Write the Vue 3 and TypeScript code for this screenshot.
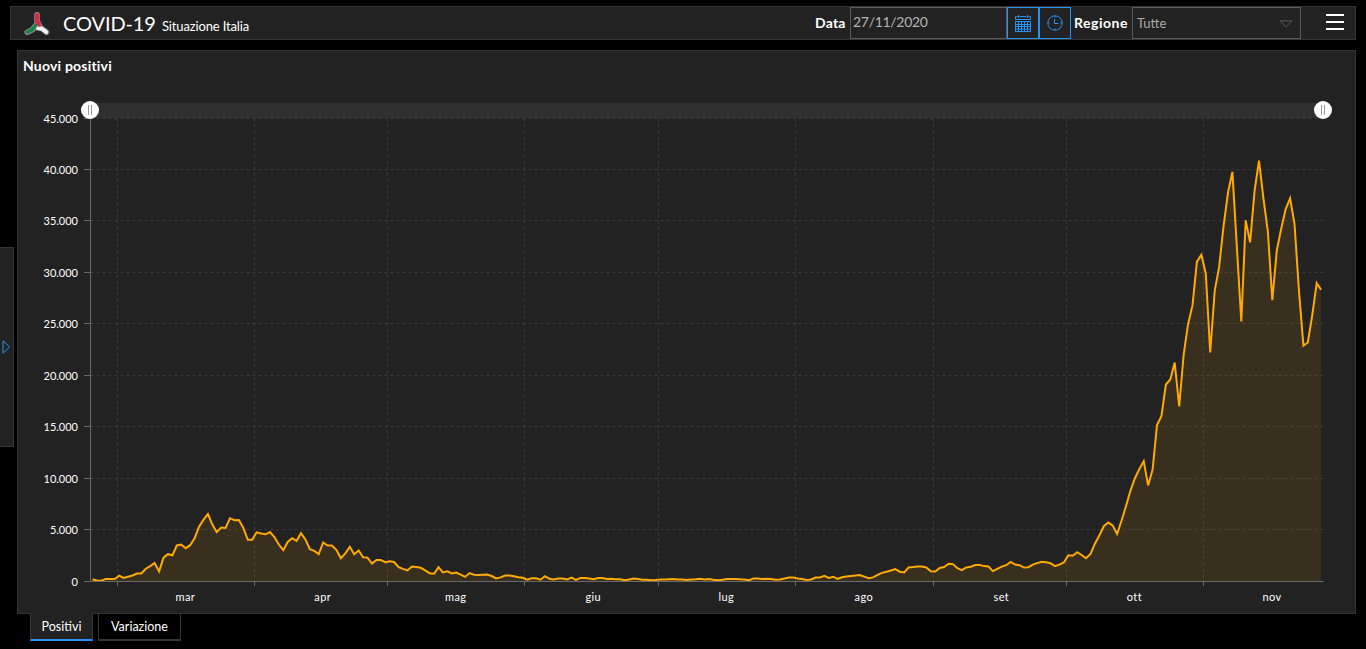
<script setup lang="ts">
interface Month {
  label: string
  values: number[]
}

const months: Month[] = [
  { label: '', values: [221, 93, 78, 250, 238, 240] },
  { label: 'mar', values: [566, 342, 466, 587, 769, 778, 1247, 1492, 1797, 977, 2313, 2651, 2547, 3497, 3590, 3233, 3526, 4207, 5322, 5986, 6557, 5560, 4789, 5249, 5210, 6153, 5959, 5974, 5217, 4050, 4053] },
  { label: 'apr', values: [4782, 4668, 4585, 4805, 4316, 3599, 3039, 3836, 4204, 3951, 4694, 4092, 3153, 2972, 2667, 3786, 3493, 3491, 3047, 2256, 2729, 3370, 2646, 3021, 2357, 2324, 1739, 2091, 2086, 1872] },
  { label: 'mag', values: [1965, 1900, 1389, 1221, 1075, 1444, 1401, 1327, 1083, 802, 744, 1402, 888, 992, 789, 875, 675, 451, 813, 665, 642, 652, 669, 531, 300, 397, 584, 593, 516, 416, 355] },
  { label: 'giu', values: [178, 318, 321, 177, 518, 270, 197, 280, 283, 202, 379, 163, 346, 338, 301, 210, 328, 331, 251, 264, 224, 221, 113, 190, 296, 255, 175, 174, 126, 142] },
  { label: 'lug', values: [182, 201, 223, 235, 192, 208, 137, 193, 214, 276, 188, 234, 169, 114, 162, 230, 231, 249, 218, 190, 128, 280, 306, 252, 274, 254, 168, 202, 289, 382, 379] },
  { label: 'ago', values: [295, 238, 159, 190, 384, 401, 552, 347, 463, 259, 412, 476, 522, 574, 629, 477, 320, 401, 642, 840, 947, 1071, 1209, 953, 876, 1366, 1409, 1460, 1444, 1365, 996] },
  { label: 'set', values: [975, 1326, 1397, 1732, 1694, 1296, 1108, 1366, 1430, 1597, 1616, 1501, 1456, 1008, 1229, 1452, 1585, 1907, 1638, 1587, 1350, 1391, 1640, 1786, 1912, 1869, 1766, 1494, 1647, 1851] },
  { label: 'ott', values: [2548, 2499, 2844, 2578, 2257, 2677, 3678, 4458, 5372, 5724, 5456, 4619, 5898, 7332, 8804, 10010, 10925, 11705, 9338, 10874, 15199, 16079, 19143, 19644, 21273, 17012, 21994, 24991, 26831, 31084, 31758] },
  { label: 'nov', values: [29907, 22253, 28244, 30550, 34505, 37809, 39811, 32616, 25271, 35098, 32961, 37978, 40902, 37255, 33979, 27354, 32191, 34283, 36176, 37242, 34767, 28337, 22930, 23232, 25853, 29003, 28352] },
]

const left = 72.5
const right = 1305.5
const top = 37.5
const bottom = 500.5
const maxValue = 45000

const daily = months.flatMap((m) => m.values)
const step = (right - left) / daily.length
const yOf = (v: number): number => bottom - (v / maxValue) * (bottom - top)
const crisp = (n: number): number => Math.floor(n) + 0.5

// Daylight saving time moves a day's start one hour earlier.
const winter = ['', 'mar', 'nov']
const dayShift = (label: string): number => (winter.includes(label) ? 0 : -1 / 24)

const points = daily.map((v, i) => `${(left + (i + 0.46) * step).toFixed(1)},${yOf(v).toFixed(1)}`)
const linePath = 'M' + points.join('L')
const areaPath = `${linePath}L${(right - step * 0.54).toFixed(1)},${bottom}L${(left + step * 0.46).toFixed(1)},${bottom}Z`

const rows = Array.from({ length: 10 }, (_, i) => ({
  y: crisp(yOf(i * 5000) - 0.46),
  label: i === 0 ? '0' : `${i * 5}.000`,
}))

let day = 0
const columns = months
  .map((m) => {
    const start = day + dayShift(m.label)
    day += m.values.length
    return { label: m.label, x: crisp(left + start * step), mid: left + (start + 15.4) * step }
  })
  .filter((c) => c.label !== '')
</script>

<template>
  <div class="dashboard">
    <header class="topbar">
      <svg class="logo" width="26" height="24" viewBox="0 0 26 24">
        <g fill="none" stroke-linecap="round" stroke-linejoin="round">
          <g stroke="#8e8e8e" stroke-width="5.6">
            <path d="M13 3.800v6l2.400 4.600" />
            <path d="M12 14.200l-3.600 4.600-5.100 2.400" />
            <path d="M12.800 16.400l5.200 1.200 4.400 3.600" />
          </g>
          <path stroke="#f4f4f4" stroke-width="3.8" d="M13.400 16.800l4.600 1 4.200 3.200" />
          <path stroke="#168444" stroke-width="3.8" d="M11.800 14.400l-3.400 4.200-4.800 2.300" />
          <path stroke="#de2745" stroke-width="4" d="M13 4v5.600l2.200 4.200" />
        </g>
      </svg>
      <h1 class="title">COVID-19</h1>
      <span class="subtitle">Situazione Italia</span>
      <label class="caption date-caption">Data</label>
      <div class="date-field">27/11/2020</div>
      <button class="tool" aria-label="Calendario">
        <svg width="16" height="17" viewBox="0 0 16 17" fill="none" stroke="#2693f3">
          <path d="M2.500 1.500H.5v3h15v-3h-2M4.500 1.500h7M3.500 0v3M12.500 0v3M.5 6.500h15v10H.5zM.5 9.500h15M.5 11.500h15M.5 14h15M3.500 6.500v10M6.500 6.500v10M9.500 6.500v10M12.500 6.500v10" />
        </svg>
      </button>
      <button class="tool clock" aria-label="Ora">
        <svg width="16" height="16" viewBox="0 0 16 16" fill="none" stroke="#2693f3">
          <circle cx="8" cy="8" r="7.2" />
          <path d="M7.500 4v4.500h4M8 1v1.500M8 13.500V15M1 8h1.500M13.500 8H15" />
        </svg>
      </button>
      <label class="caption region-caption">Regione</label>
      <div class="select">
        <span>Tutte</span>
        <svg width="14" height="8" viewBox="0 0 14 8"><path d="M1.200.8h11.600L7 6.800z" fill="none" stroke="#5a5a5a" /></svg>
      </div>
      <button class="menu" aria-label="Menu"><i /><i /><i /></button>
    </header>

    <main class="body">
      <aside class="drawer">
        <svg width="9" height="14" viewBox="0 0 9 14"><path d="M1 .8v12.400L7.600 7z" fill="none" stroke="#2693f3" /></svg>
      </aside>
      <div class="content">
        <section class="panel">
          <h2>Nuovi positivi</h2>
          <svg class="chart" width="1337" height="532" viewBox="0 0 1337 532">
            <rect x="72" y="22" width="1233" height="15" fill="#303030" />
            <g class="grid">
              <line v-for="r in rows.slice(1)" :key="r.y" :x1="left" :x2="right" :y1="r.y" :y2="r.y" />
              <line v-for="c in columns" :key="c.label" :x1="c.x" :x2="c.x" :y1="top" :y2="bottom" />
            </g>
            <path :d="areaPath" fill="#ffaa00" fill-opacity="0.1" />
            <path :d="linePath" fill="none" stroke="#ffaa00" stroke-width="2" />
            <g class="axis">
              <line :x1="left" :x2="left" :y1="top" :y2="bottom" />
              <line :x1="left" :x2="right" :y1="bottom" :y2="bottom" />
              <line v-for="r in rows" :key="r.y" x1="66" x2="72" :y1="r.y" :y2="r.y" />
              <line v-for="c in columns" :key="c.label" :x1="c.x" :x2="c.x" y1="501" y2="505" />
            </g>
            <g class="labels">
              <text v-for="r in rows" :key="r.label" x="60" :y="r.y + 4" text-anchor="end">{{ r.label }}</text>
              <text v-for="c in columns" :key="c.label" class="month" :x="c.mid" y="519.5" text-anchor="middle">{{ c.label }}</text>
            </g>
            <g v-for="x in [72, 1305]" :key="x">
              <circle :cx="x" cy="29" r="9" fill="#fff" />
              <path :d="`M${x - 1.5} 24v10M${x + 1.5} 24v10`" stroke="#999" />
            </g>
          </svg>
        </section>
        <nav class="tabs">
          <button class="tab active">Positivi</button>
          <button class="tab">Variazione</button>
        </nav>
      </div>
    </main>
  </div>
</template>

<style>
body {
  background: #000;
}
</style>

<style scoped>
.dashboard {
  box-sizing: border-box;
  width: 1366px;
  height: 649px;
  padding: 6px 10px 0 0;
  overflow: hidden;
  background: #000;
  color: #fff;
  font-family: Lato, "Liberation Sans", sans-serif;
}
button {
  margin: 0;
  padding: 0;
  border: 0;
  border-radius: 0;
  background: none;
  color: inherit;
  font-family: inherit;
}
svg {
  display: block;
  flex: none;
}
.topbar {
  box-sizing: border-box;
  display: flex;
  height: 34px;
  margin-left: 10px;
  border: 1px solid #353535;
  background: #222;
}
.logo {
  margin: 4px 0 0 13px;
}
.title {
  width: 98px;
  margin: 0 0 0 13px;
  font-size: 20px;
  line-height: 32px;
  font-weight: 400;
  letter-spacing: -0.1px;
  white-space: nowrap;
}
.subtitle {
  flex: 1;
  padding-left: 1px;
  font-size: 13px;
  line-height: 38px;
  letter-spacing: -0.15px;
}
.caption {
  font-size: 14px;
  line-height: 32px;
  font-weight: 700;
  white-space: nowrap;
}
.date-caption {
  width: 35px;
  letter-spacing: 0.2px;
}
.region-caption {
  width: 58px;
  margin-left: 3px;
  letter-spacing: 0.5px;
}
.date-field,
.select,
.tool {
  box-sizing: border-box;
  height: 32px;
  border: 1px solid #5a5a5a;
}
.date-field {
  width: 157px;
  padding-left: 2px;
  color: #b4b4b4;
  font-size: 14px;
  line-height: 28px;
  letter-spacing: -0.3px;
}
.tool {
  display: grid;
  place-items: center;
  width: 32px;
  border-color: #2693f3;
}
.select {
  display: flex;
  align-items: center;
  justify-content: space-between;
  width: 169px;
  padding: 0 7px 0 4px;
  color: #adadad;
  font-size: 13px;
}
.select svg {
  margin-top: 1px;
}
.menu {
  display: flex;
  flex-direction: column;
  gap: 5px;
  width: 18px;
  margin: 7px 11px 0 25px;
}
.menu i {
  width: 18px;
  height: 2px;
  background: #fff;
}
.body {
  display: flex;
  gap: 3px;
  margin-top: 10px;
}
.drawer {
  box-sizing: border-box;
  display: flex;
  align-items: center;
  width: 14px;
  height: 200px;
  margin-top: 197px;
  padding-left: 2px;
  border: 1px solid #353535;
  border-left: 0;
  background: #222;
}
.content {
  flex: 1;
}
.panel {
  box-sizing: border-box;
  height: 564px;
  border: 1px solid #353535;
  background: #222;
}
.panel h2 {
  height: 30px;
  margin: 0;
  padding-left: 5px;
  font-size: 14px;
  line-height: 30px;
  font-weight: 700;
  letter-spacing: 0.2px;
}
.grid line {
  stroke: #fff;
  stroke-opacity: 0.11;
  stroke-dasharray: 3 3;
}
.axis line {
  stroke: #6a6a6a;
}
.labels {
  fill: #fff;
  font-size: 11px;
}
.labels .month {
  letter-spacing: 0.4px;
}
.tabs {
  display: flex;
  gap: 5px;
  margin: -1px 0 0 13px;
}
.tab {
  box-sizing: border-box;
  width: 83px;
  height: 28px;
  border: solid #353535;
  border-width: 1px 1px 2px;
  font-size: 12.500px;
  line-height: 24px;
}
.tab.active {
  width: 63px;
  border-top-color: #222;
  border-bottom-color: #2693f3;
  background: #222;
}
</style>
